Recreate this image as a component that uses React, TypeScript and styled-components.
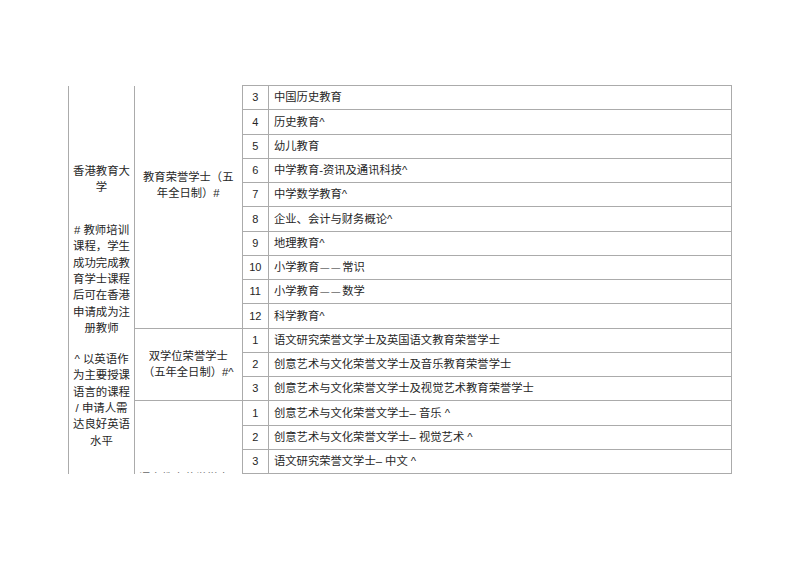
import React from 'react'
import styled, { createGlobalStyle } from 'styled-components'

const GlobalStyle = createGlobalStyle`
  html, body {
    margin: 0;
    padding: 0;
    background: #fff;
  }
  body {
    font-family: "Liberation Sans", "Noto Sans CJK SC", sans-serif;
    color: #262626;
  }
`

const RULE = '1px solid #ababab'

const Page = styled.div`
  width: 800px;
  height: 566px;
  padding: 85px 0 0 68px;
  box-sizing: border-box;
  overflow: hidden;
`

const Table = styled.table`
  border-collapse: collapse;
  table-layout: fixed;
  width: 664px;
  font-size: 11.3px;
  line-height: 16.3px;
`

const Row = styled.tr`
  height: 24.25px;
`

const SchoolCell = styled.td`
  border-left: ${RULE};
  border-right: ${RULE};
  vertical-align: top;
  text-align: center;
  padding: 77px 2px 0;
  font-size: 11.4px;
`

const Para = styled.div<{ $gap: number }>`
  margin-top: ${(p) => p.$gap}px;
`

const Line = styled.div`
  white-space: nowrap;
`

const DegreeCell = styled.td<{ $top?: number; $open?: boolean }>`
  border-right: ${RULE};
  border-bottom: ${(p) => (p.$open ? 'none' : RULE)};
  vertical-align: ${(p) => (p.$top !== undefined ? 'top' : 'middle')};
  padding: ${(p) => (p.$top !== undefined ? `${p.$top}px 4px 0` : '0 4px')};
  text-align: center;
`

// continued on the next page: only the tops of the glyphs show
const Clip = styled.div`
  height: 72px;
  overflow: hidden;
  padding-top: 69px;
  box-sizing: border-box;
  color: #666;
`

const NumCell = styled.td`
  border: ${RULE};
  text-align: center;
  padding: 0;
  font-size: 11px;
`

const ItemCell = styled.td`
  border: ${RULE};
  padding: 0 5px;
  white-space: nowrap;
`

const Dash = styled.span`
  font-size: 9px;
  letter-spacing: 2px;
  margin-left: 1px;
`

const schoolNotes = [
  { gap: 0, lines: ['香港教育大', '学'] },
  {
    gap: 27,
    lines: ['# 教师培训', '课程，学生', '成功完成教', '育学士课程', '后可在香港', '申请成为注', '册教师'],
  },
  { gap: 15, lines: ['^ 以英语作', '为主要授课', '语言的课程', '/ 申请人需', '达良好英语', '水平'] },
]

interface Group {
  degree: string[]
  top?: number
  clipped?: boolean
  items: { no: number; name: string }[]
}

const groups: Group[] = [
  {
    degree: ['教育荣誉学士（五', '年全日制）#'],
    top: 83,
    items: [
      { no: 3, name: '中国历史教育' },
      { no: 4, name: '历史教育^' },
      { no: 5, name: '幼儿教育' },
      { no: 6, name: '中学教育-资讯及通讯科技^' },
      { no: 7, name: '中学数学教育^' },
      { no: 8, name: '企业、会计与财务概论^' },
      { no: 9, name: '地理教育^' },
      { no: 10, name: '小学教育——常识' },
      { no: 11, name: '小学教育——数学' },
      { no: 12, name: '科学教育^' },
    ],
  },
  {
    degree: ['双学位荣誉学士', '（五年全日制）#^'],
    items: [
      { no: 1, name: '语文研究荣誉文学士及英国语文教育荣誉学士' },
      { no: 2, name: '创意艺术与文化荣誉文学士及音乐教育荣誉学士' },
      { no: 3, name: '创意艺术与文化荣誉文学士及视觉艺术教育荣誉学士' },
    ],
  },
  {
    degree: ['语文教育荣誉学士（四年全', '日制）^'],
    clipped: true,
    items: [
      { no: 1, name: '创意艺术与文化荣誉文学士– 音乐 ^' },
      { no: 2, name: '创意艺术与文化荣誉文学士– 视觉艺术 ^' },
      { no: 3, name: '语文研究荣誉文学士– 中文 ^' },
    ],
  },
]

const totalRows = groups.reduce((n, g) => n + g.items.length, 0)

function ItemName({ name }: { name: string }) {
  const parts = name.split('——')
  if (parts.length === 1) return <>{name}</>
  return (
    <>
      {parts[0]}
      <Dash>——</Dash>
      {parts[1]}
    </>
  )
}

function DegreeText({ group }: { group: Group }) {
  const lines = group.degree.map((l) => <Line key={l}>{l}</Line>)
  return group.clipped ? <Clip>{lines}</Clip> : <>{lines}</>
}

export default function App() {
  return (
    <Page>
      <GlobalStyle />
      <Table>
        <colgroup>
          <col style={{ width: 66 }} />
          <col style={{ width: 107.5 }} />
          <col style={{ width: 26.5 }} />
          <col />
        </colgroup>
        <tbody>
          {groups.map((group, gi) =>
            group.items.map((item, ii) => (
              <Row key={`${gi}-${ii}`}>
                {gi === 0 && ii === 0 && (
                  <SchoolCell rowSpan={totalRows}>
                    {schoolNotes.map((p, pi) => (
                      <Para key={pi} $gap={p.gap}>
                        {p.lines.map((l) => (
                          <Line key={l}>{l}</Line>
                        ))}
                      </Para>
                    ))}
                  </SchoolCell>
                )}
                {ii === 0 && (
                  <DegreeCell
                    rowSpan={group.items.length}
                    $top={group.clipped ? 0 : group.top}
                    $open={group.clipped}
                  >
                    <DegreeText group={group} />
                  </DegreeCell>
                )}
                <NumCell>{item.no}</NumCell>
                <ItemCell>
                  <ItemName name={item.name} />
                </ItemCell>
              </Row>
            ))
          )}
        </tbody>
      </Table>
    </Page>
  )
}
